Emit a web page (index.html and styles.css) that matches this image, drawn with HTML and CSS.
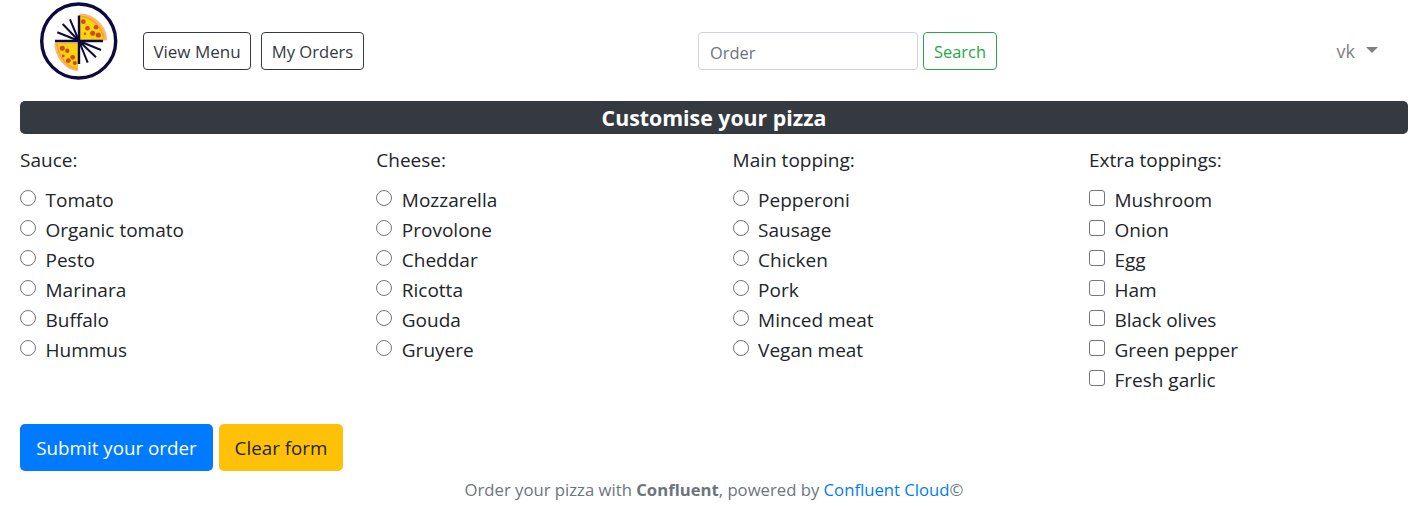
FILE: index.html
```html
<!DOCTYPE html>
<html lang="en">
<head>
<meta charset="utf-8">
<title>Customise your pizza</title>
<link rel="stylesheet" href="styles.css">
</head>
<body>
<nav class="navbar">
  <svg class="logo" viewBox="0 0 80 80" width="80" height="80" aria-label="Pizza logo">
    <circle cx="39.7" cy="41" r="37" fill="#fff" stroke="#0c0a3e" stroke-width="3.400"/>
    <path d="M40.500 13.500 C55 13 69 27 68 40.500 L40.500 40.500 Z" fill="#f7b77c"/>
    <path d="M41 15.500 C53 15.500 66 28 65.500 39.500 L41 39.500 Z" fill="#f6a81c"/>
    <path d="M41.500 17 C52 17.500 63.500 28.500 64 39.500 L41.500 39.500 Z" fill="#fdd20e"/>
    <g fill="#cb4a2a">
      <circle cx="44.300" cy="21.700" r="2.400"/><circle cx="48.500" cy="28.300" r="2.300"/><circle cx="57" cy="27.300" r="2.300"/><circle cx="53.700" cy="33.300" r="2.500"/><circle cx="59.300" cy="35" r="2.600"/><circle cx="46" cy="33.800" r="1.200"/>
    </g>
    <path d="M15.500 42.500 L39 42.500 L39 71 C26 71 15 56 15.500 42.500 Z" fill="#f7b77c"/>
    <path d="M17.500 43 L38.500 43 L38.500 69.500 C27 68.500 17.500 55 17.500 43 Z" fill="#f6a81c"/>
    <path d="M19 43.500 L38.500 43.500 L38.500 68 C28 66.500 19.500 55 19 43.500 Z" fill="#fdd20e"/>
    <g fill="#cb4a2a">
      <circle cx="23.300" cy="48.300" r="2.500"/><circle cx="28.300" cy="50.700" r="2.200"/><circle cx="33.700" cy="57.300" r="2.400"/><circle cx="29.300" cy="60.700" r="2.400"/><circle cx="35.800" cy="63" r="2.100"/><circle cx="24.300" cy="56" r="1.400"/>
    </g>
    <g stroke="#0c0a3e" fill="none">
      <path d="M40 15.500V64M16 41H64" stroke-width="2.400"/>
      <path d="M40 41L31 19.300M40 41L23.700 24M40 41L18.300 32.300M40 41L62 50M40 41L57 57.300M40 41L48.700 62.700" stroke-width="2"/>
    </g>
  </svg>
  <div class="nav-links">
    <a class="btn btn-outline-dark btn-menu">View Menu</a>
    <a class="btn btn-outline-dark btn-orders">My Orders</a>
  </div>
  <form class="search">
    <input class="search-input" type="text" placeholder="Order">
    <button class="btn btn-outline-success" type="button">Search</button>
  </form>
  <div class="user">vk<span class="caret"></span></div>
</nav>
<main class="content">
  <h1 class="title">Customise your pizza</h1>
  <div class="options">
    <section>
      <p class="group-label">Sauce:</p>
      <label class="option"><input type="radio" name="sauce"><span>Tomato</span></label>
      <label class="option"><input type="radio" name="sauce"><span>Organic tomato</span></label>
      <label class="option"><input type="radio" name="sauce"><span>Pesto</span></label>
      <label class="option"><input type="radio" name="sauce"><span>Marinara</span></label>
      <label class="option"><input type="radio" name="sauce"><span>Buffalo</span></label>
      <label class="option"><input type="radio" name="sauce"><span>Hummus</span></label>
    </section>
    <section>
      <p class="group-label">Cheese:</p>
      <label class="option"><input type="radio" name="cheese"><span>Mozzarella</span></label>
      <label class="option"><input type="radio" name="cheese"><span>Provolone</span></label>
      <label class="option"><input type="radio" name="cheese"><span>Cheddar</span></label>
      <label class="option"><input type="radio" name="cheese"><span>Ricotta</span></label>
      <label class="option"><input type="radio" name="cheese"><span>Gouda</span></label>
      <label class="option"><input type="radio" name="cheese"><span>Gruyere</span></label>
    </section>
    <section>
      <p class="group-label">Main topping:</p>
      <label class="option"><input type="radio" name="main"><span>Pepperoni</span></label>
      <label class="option"><input type="radio" name="main"><span>Sausage</span></label>
      <label class="option"><input type="radio" name="main"><span>Chicken</span></label>
      <label class="option"><input type="radio" name="main"><span>Pork</span></label>
      <label class="option"><input type="radio" name="main"><span>Minced meat</span></label>
      <label class="option"><input type="radio" name="main"><span>Vegan meat</span></label>
    </section>
    <section>
      <p class="group-label">Extra toppings:</p>
      <label class="option"><input type="checkbox"><span>Mushroom</span></label>
      <label class="option"><input type="checkbox"><span>Onion</span></label>
      <label class="option"><input type="checkbox"><span>Egg</span></label>
      <label class="option"><input type="checkbox"><span>Ham</span></label>
      <label class="option"><input type="checkbox"><span>Black olives</span></label>
      <label class="option"><input type="checkbox"><span>Green pepper</span></label>
      <label class="option"><input type="checkbox"><span>Fresh garlic</span></label>
    </section>
  </div>
  <div class="actions">
    <button class="btn-lg btn-primary" type="button">Submit your order</button>
    <button class="btn-lg btn-warning" type="button">Clear form</button>
  </div>
  <p class="footer">Order your pizza with <strong>Confluent</strong>, powered by <a href="#">Confluent Cloud</a>©</p>
</main>
</body>
</html>
```

FILE: styles.css
```css
* { box-sizing: border-box; }
html, body { margin: 0; padding: 0; }
body {
  font-family: "Open Sans", "Noto Sans", sans-serif;
  font-size: 19px;
  line-height: 27px;
  color: #212529;
  background: #fff;
  height: 507px;
  overflow: hidden;
}
.navbar {
  display: flex;
  align-items: flex-start;
  height: 101px;
  padding: 0 37px 0 39px;
}
.logo { flex: none; }
.nav-links { display: flex; gap: 10px; margin: 32px 0 0 24px; }
.btn {
  display: inline-flex;
  align-items: center;
  justify-content: center;
  height: 38px;
  padding: 0;
  border: 1px solid #343a40;
  border-radius: 4px;
  background: #fff;
  color: #343a40;
  font: inherit;
  font-size: 16.7px;
}
.btn-menu { width: 108px; font-size: 17px; }
.btn-orders { width: 103px; font-size: 16.6px; }
.search { display: flex; gap: 5px; margin: 32px 0 0 334px; }
.search-input {
  width: 220px;
  height: 38px;
  padding: 2px 11px 0;
  border: 1px solid #ced4da;
  border-radius: 4px;
  font: inherit;
  font-size: 16.4px;
}
.search-input::placeholder { color: #6c757d; opacity: 1; }
.btn-outline-success { border-color: #28a745; color: #28a745; width: 74px; font-size: 16.4px; }
.user {
  margin: 38px 0 0 auto;
  color: #808080;
  font-size: 18px;
  line-height: 27px;
  display: flex;
  align-items: center;
}
.caret {
  margin-left: 11px;
  border-top: 6px solid #808080;
  border-left: 6px solid transparent;
  border-right: 6px solid transparent;
  margin-top: -3px;
}
.content { padding: 0 7px 0 20px; }
.title {
  margin: 0;
  height: 33px;
  background: #343a40;
  color: #fff;
  border-radius: 5px;
  text-align: center;
  font-size: 21.3px;
  font-weight: 700;
  line-height: 33px;
}
.options {
  display: grid;
  grid-template-columns: 356.3px 356.3px 356.4px 1fr;
  height: 290px;
  padding-top: 13px;
}
.group-label { margin: 0 0 11px; line-height: 27px; }
.option {
  display: flex;
  align-items: center;
  height: 30px;
}
.option input {
  margin: 0 9.5px 4px 0;
  width: 16px;
  height: 16px;
  flex: none;
}
.option input[type="checkbox"] {
  appearance: none;
  border: 1.5px solid #767676;
  border-radius: 3px;
  background: #fff;
}
.actions { display: flex; gap: 6px; }
.btn-lg {
  height: 47px;
  padding: 2px 0 0;
  border: 0;
  border-radius: 5px;
  font: inherit;
  font-size: 18.8px;
}
.btn-primary { background: #007bff; color: #fff; width: 193px; }
.btn-warning { background: #ffc107; color: #212529; width: 124px; }
.footer {
  margin: 5px 0 0;
  text-align: center;
  color: #6c757d;
  font-size: 16.7px;
}
.footer a { color: #007bff; text-decoration: none; }
```
